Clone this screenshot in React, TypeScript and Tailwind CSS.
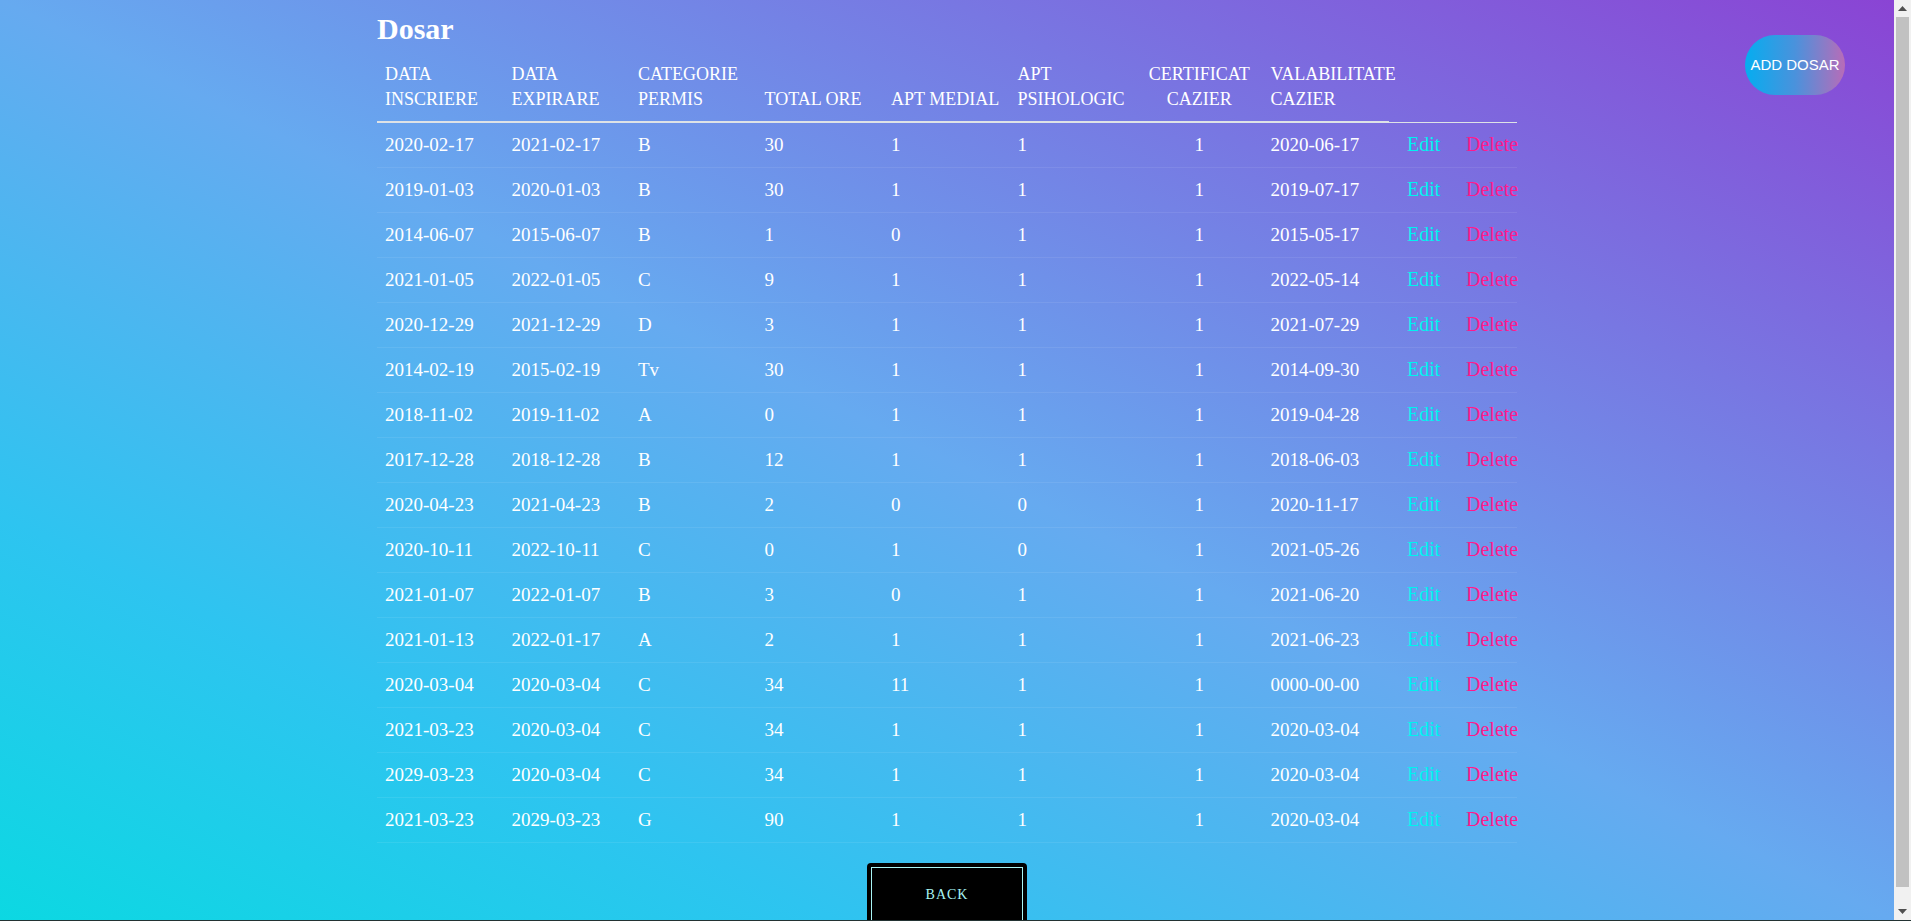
import React from "react";

const rows: string[][] = [
  ["2020-02-17", "2021-02-17", "B", "30", "1", "1", "1", "2020-06-17"],
  ["2019-01-03", "2020-01-03", "B", "30", "1", "1", "1", "2019-07-17"],
  ["2014-06-07", "2015-06-07", "B", "1", "0", "1", "1", "2015-05-17"],
  ["2021-01-05", "2022-01-05", "C", "9", "1", "1", "1", "2022-05-14"],
  ["2020-12-29", "2021-12-29", "D", "3", "1", "1", "1", "2021-07-29"],
  ["2014-02-19", "2015-02-19", "Tv", "30", "1", "1", "1", "2014-09-30"],
  ["2018-11-02", "2019-11-02", "A", "0", "1", "1", "1", "2019-04-28"],
  ["2017-12-28", "2018-12-28", "B", "12", "1", "1", "1", "2018-06-03"],
  ["2020-04-23", "2021-04-23", "B", "2", "0", "0", "1", "2020-11-17"],
  ["2020-10-11", "2022-10-11", "C", "0", "1", "0", "1", "2021-05-26"],
  ["2021-01-07", "2022-01-07", "B", "3", "0", "1", "1", "2021-06-20"],
  ["2021-01-13", "2022-01-17", "A", "2", "1", "1", "1", "2021-06-23"],
  ["2020-03-04", "2020-03-04", "C", "34", "11", "1", "1", "0000-00-00"],
  ["2021-03-23", "2020-03-04", "C", "34", "1", "1", "1", "2020-03-04"],
  ["2029-03-23", "2020-03-04", "C", "34", "1", "1", "1", "2020-03-04"],
  ["2021-03-23", "2029-03-23", "G", "90", "1", "1", "1", "2020-03-04"],
];

const headers: string[][] = [
  ["DATA", "INSCRIERE"],
  ["DATA", "EXPIRARE"],
  ["CATEGORIE", "PERMIS"],
  ["TOTAL ORE"],
  ["APT MEDIAL"],
  ["APT", "PSIHOLOGIC"],
  ["CERTIFICAT", "CAZIER"],
  ["VALABILITATE", "CAZIER"],
];

function Scrollbar() {
  return (
    <div className="flex w-[17px] shrink-0 flex-col bg-[#f1f1f1]">
      <div className="flex h-[17px] items-center justify-center">
        <svg width="9" height="5" viewBox="0 0 9 5">
          <path d="M0 5 L4.5 0 L9 5 Z" fill="#505050" />
        </svg>
      </div>
      <div className="mx-[2px] mb-[16px] flex-1 bg-[#c1c1c1]" />
      <div className="flex h-[17px] items-center justify-center">
        <svg width="9" height="5" viewBox="0 0 9 5">
          <path d="M0 0 L9 0 L4.5 5 Z" fill="#505050" />
        </svg>
      </div>
    </div>
  );
}

export default function App() {
  return (
    <div className="flex h-[921px] w-full flex-col overflow-hidden">
      <div className="flex min-h-0 flex-1">
        <div className="relative min-w-0 flex-1 overflow-hidden bg-[linear-gradient(to_top_right,#0cd8e2_0%,#2ec4f0_22%,#66aaf0_50%,#8a44d4_100%)] font-['Liberation_Serif',serif] text-white">
          <div className="mx-auto w-[1140px] pt-[11px] pb-[10px]">
            <h1 className="mb-[6px] text-[30px] font-bold leading-[36px]">Dosar</h1>

            <div className="flex items-end">
              {headers.map((h, i) => (
                <div
                  key={i}
                  className={
                    "w-[126.5px] shrink-0 whitespace-nowrap border-b-2 border-[#dee2e6] px-2 pt-[9px] pb-[9px] text-[18px] leading-[25px] " +
                    (i === 6 ? "text-center" : "text-left")
                  }
                >
                  {h.map((line, j) => (
                    <div key={j}>{line}</div>
                  ))}
                </div>
              ))}
              <div className="flex-1 border-b border-[#dee2e6]" />
            </div>

            {rows.map((r, ri) => (
              <div key={ri} className="flex border-b border-white/[0.08]">
                {r.map((c, ci) => (
                  <div
                    key={ci}
                    className={
                      "w-[126.5px] shrink-0 whitespace-nowrap px-2 pt-[9px] pb-[10px] text-[19px] leading-[25px] " +
                      (ci === 6 ? "text-center" : "text-left")
                    }
                  >
                    {c}
                  </div>
                ))}
                <div className="w-[77px] shrink-0 pl-[18px] pt-[9px] pb-[10px] text-[20px] leading-[25px] text-[#00f2f0]">
                  Edit
                </div>
                <div className="flex-1 pt-[9px] pb-[10px] text-[20px] leading-[25px] text-[#ff1a8c]">
                  Delete
                </div>
              </div>
            ))}

            <div className="mt-[20px] flex justify-center">
              <button className="h-[62px] w-[160px] rounded-[4px] bg-black p-[4px]">
                <div className="flex h-full w-full items-center justify-center border border-[#a8f4f4] text-[14px] tracking-[1px] text-[#a8f4f4]">
                  BACK
                </div>
              </button>
            </div>
          </div>

          <button className="absolute right-[49px] top-[35px] flex h-[60px] w-[100px] items-center justify-center rounded-full bg-[linear-gradient(to_right,#05adf0,#4a92dc_50%,#b86cb8)] font-['Liberation_Sans',Arial,sans-serif] text-[15px] text-white">
            ADD DOSAR
          </button>
        </div>
        <Scrollbar />
      </div>
      <div className="h-px shrink-0 bg-[#233333]" />
    </div>
  );
}
